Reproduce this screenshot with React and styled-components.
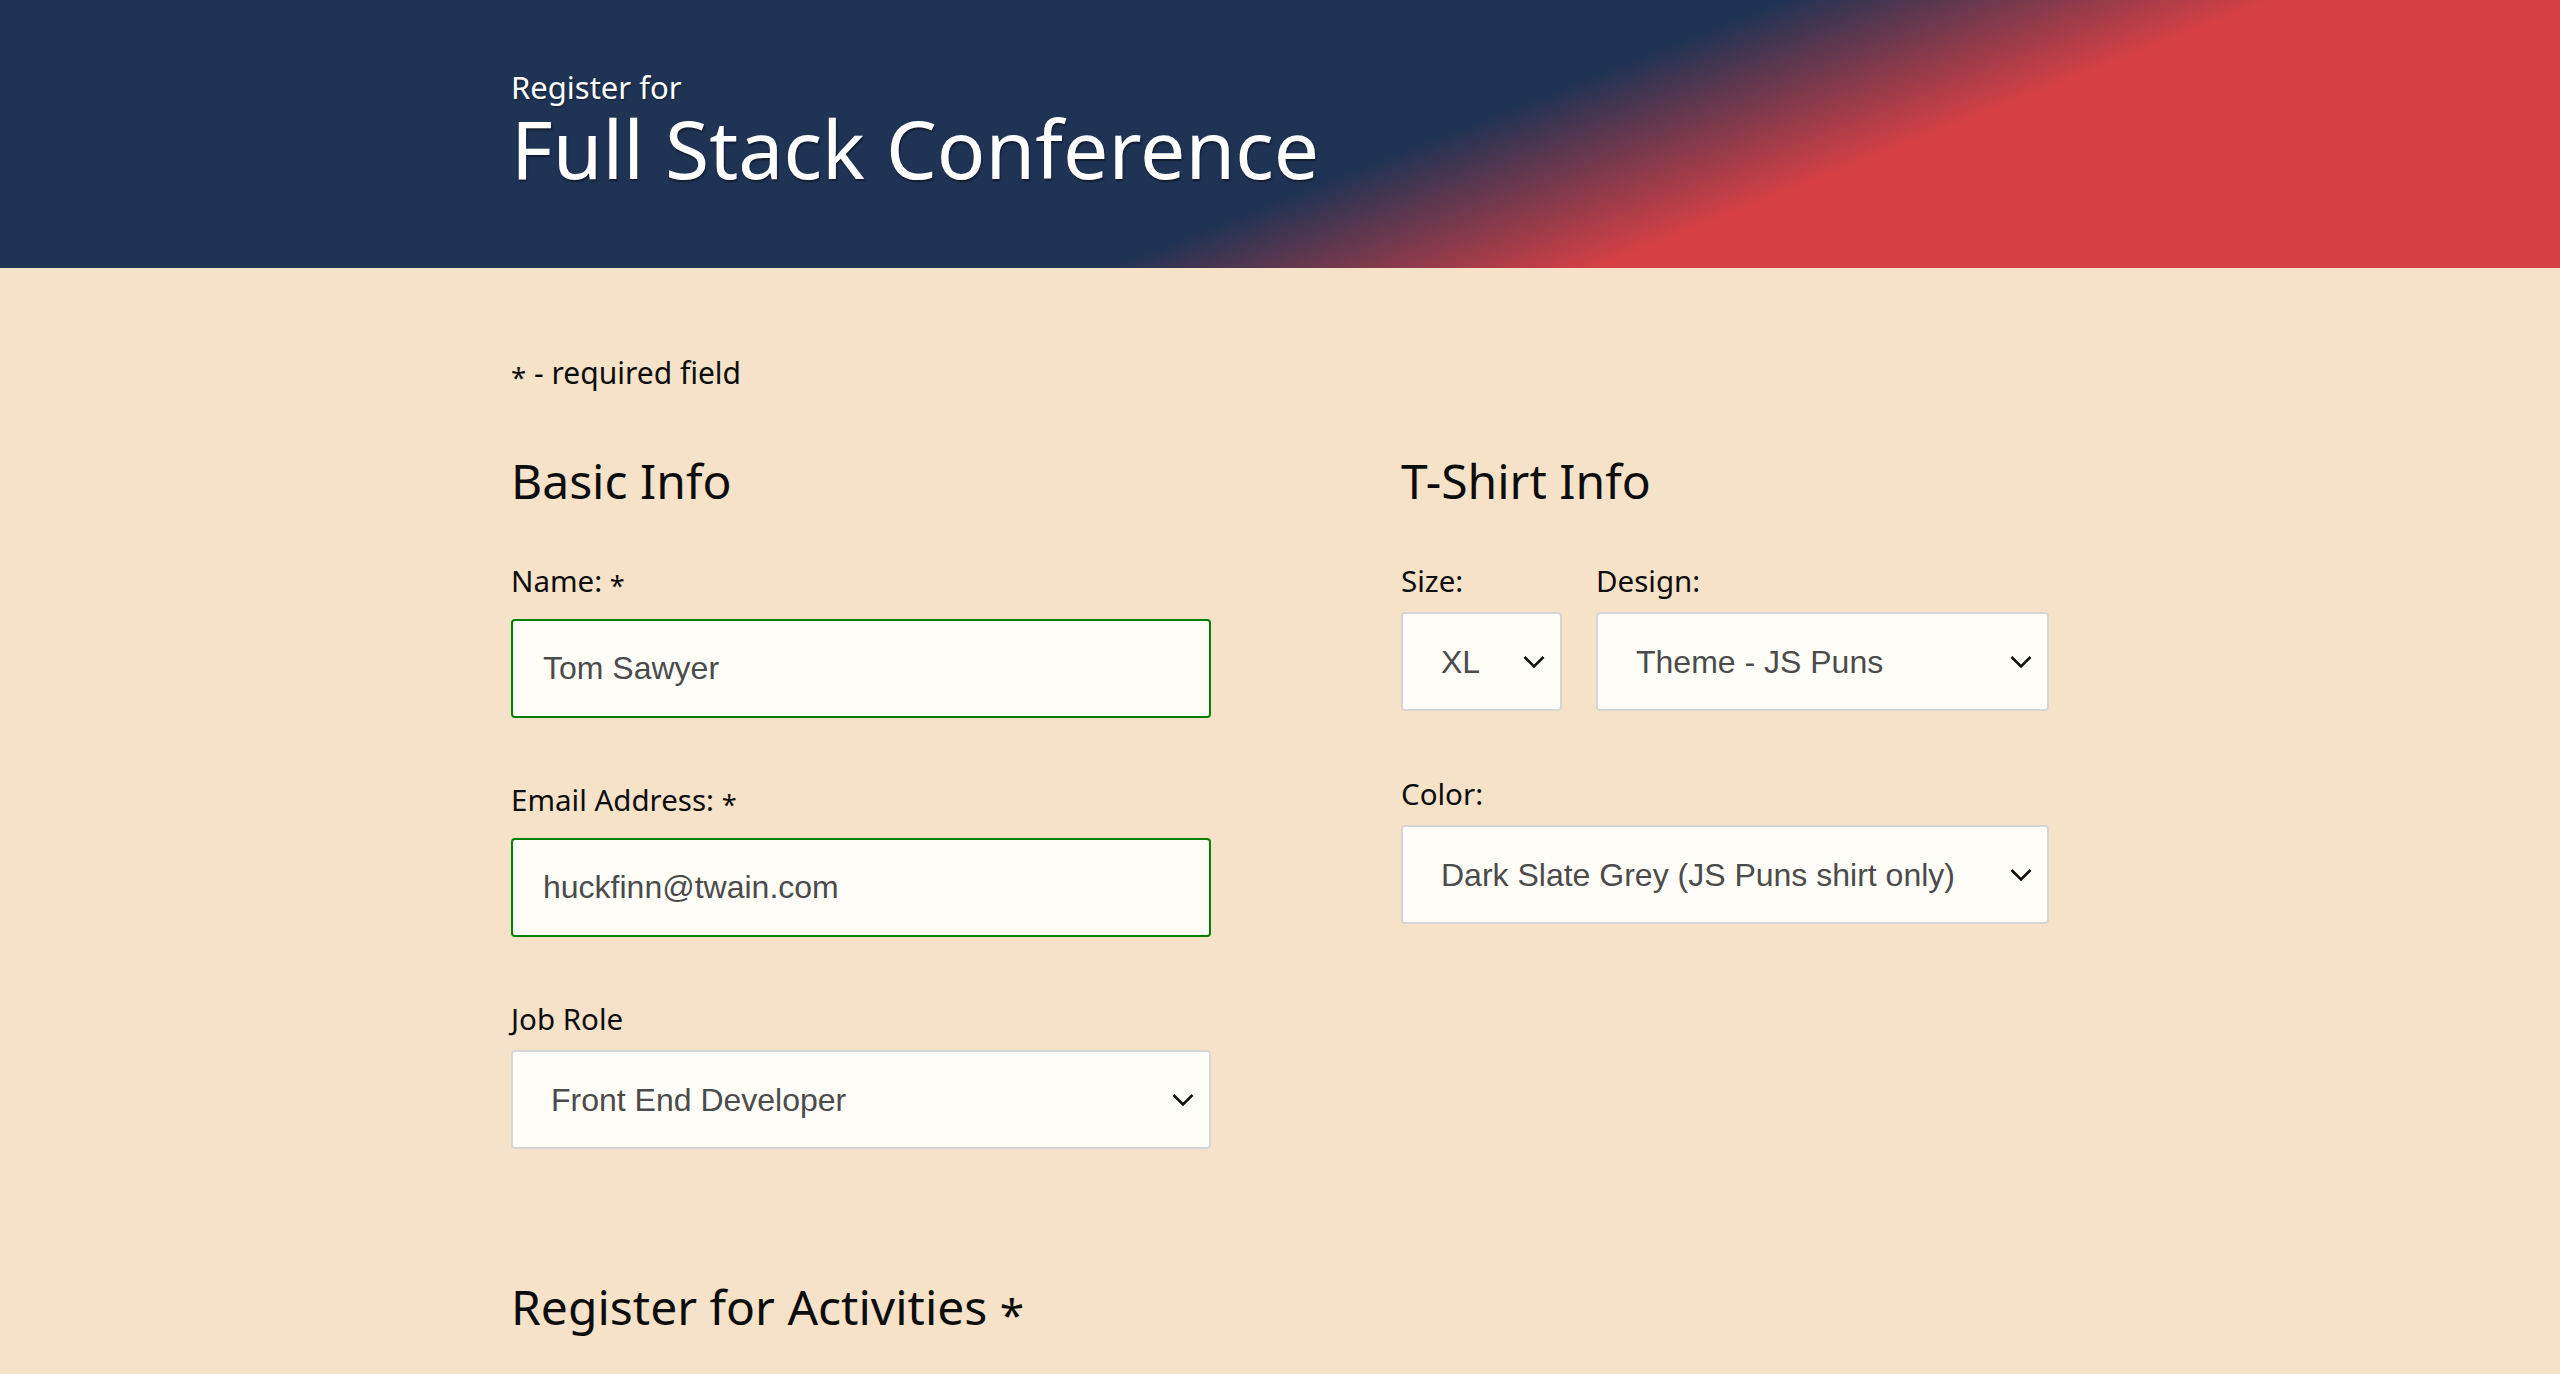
import React, { useState } from "react";
import styled, { createGlobalStyle } from "styled-components";

const GlobalStyle = createGlobalStyle`
  * {
    box-sizing: border-box;
  }
  body {
    margin: 0;
    background-color: #f6e2c8;
    font-family: "Noto Sans", "Open Sans", sans-serif;
    color: #0d0d0d;
  }
`;

const Header = styled.header`
  height: 268px;
  padding-top: 69px;
  background: linear-gradient(158.4deg, #1f3354 55%, #d64045 70.3%);
  color: white;
`;

const Wrap = styled.div`
  width: 1538px;
  margin: 0 auto;
`;

const Kicker = styled.p`
  margin: 0;
  font-size: 31px;
  line-height: 36px;
  text-shadow: 1px 1px 2px rgba(0, 0, 0, 0.35);
`;

const Title = styled.h1`
  margin: 1px 0 0;
  font-size: 80.5px;
  line-height: 84px;
  font-weight: 400;
  text-shadow: 1px 2px 2px rgba(0, 0, 0, 0.45);
`;

const Main = styled.main`
  padding-top: 85px;
  padding-bottom: 80px;
`;

const Note = styled.p`
  margin: 0;
  font-size: 30px;
  line-height: 40px;
`;

const Star = styled.span`
  position: relative;
  top: 0.14em;
  font-size: 0.92em;
`;

const Columns = styled.div`
  display: grid;
  grid-template-columns: 1fr 648px;
  margin-top: 60px;
`;

const Fieldset = styled.fieldset`
  border: 0;
  margin: 0;
  padding: 0;
  min-width: 0;
`;

const Legend = styled.h2`
  margin: ${(p) => p.$top || 0}px 0 52px;
  font-size: 48px;
  line-height: 56px;
  font-weight: 400;
`;

const Label = styled.label`
  display: block;
  margin-top: ${(p) => p.$top || 0}px;
  font-size: 29.5px;
  line-height: 40px;
`;

const Field = styled.div`
  width: ${(p) => p.$width}px;
`;

const TextInput = styled.input`
  display: block;
  width: 100%;
  height: 99px;
  margin-top: 17px;
  padding: 0 30px;
  border: 2px solid #008000;
  border-radius: 4px;
  background: #fffdf8;
  font-family: "Liberation Sans", Arial, Helvetica, sans-serif;
  font-size: 32px;
  color: #4b4b4b;
  outline: 0;
`;

const SelectBox = styled.div`
  position: relative;
  margin-top: 11px;

  svg {
    position: absolute;
    top: 50%;
    right: 17px;
    transform: translateY(-50%);
    pointer-events: none;
  }
`;

const Select = styled.select`
  display: block;
  width: 100%;
  height: 99px;
  padding: 0 48px 0 38px;
  border: 2px solid #d6d6d6;
  border-radius: 4px;
  background: #fffdf8;
  appearance: none;
  font-family: "Liberation Sans", Arial, Helvetica, sans-serif;
  font-size: 32px;
  color: #4b4b4b;
  outline: 0;
`;

const Row = styled.div`
  display: flex;
  gap: 34px;
`;

const Chevron = () => (
  <svg width="22" height="13" viewBox="0 0 22 13">
    <polyline
      points="1.5,1.5 11,11 20.5,1.5"
      fill="none"
      stroke="#111"
      strokeWidth="2.6"
    />
  </svg>
);

function Dropdown({ id, value, options, onChange }) {
  return (
    <SelectBox>
      <Select id={id} value={value} onChange={(e) => onChange(e.target.value)}>
        {options.map((o) => (
          <option key={o}>{o}</option>
        ))}
      </Select>
      <Chevron />
    </SelectBox>
  );
}

export default function App() {
  const [name, setName] = useState("Tom Sawyer");
  const [email, setEmail] = useState("huckfinn@twain.com");
  const [role, setRole] = useState("Front End Developer");
  const [size, setSize] = useState("XL");
  const [design, setDesign] = useState("Theme - JS Puns");
  const [color, setColor] = useState("Dark Slate Grey (JS Puns shirt only)");

  return (
    <>
      <GlobalStyle />
      <Header>
        <Wrap>
          <Kicker>Register for</Kicker>
          <Title>Full Stack Conference</Title>
        </Wrap>
      </Header>
      <Main>
        <Wrap>
          <Note>
            <Star>*</Star> - required field
          </Note>
          <Columns>
            <Fieldset>
              <Legend>Basic Info</Legend>
              <Field $width={700}>
                <Label htmlFor="name">
                  Name: <Star>*</Star>
                </Label>
                <TextInput
                  id="name"
                  value={name}
                  onChange={(e) => setName(e.target.value)}
                />
                <Label htmlFor="email" $top={62}>
                  Email Address: <Star>*</Star>
                </Label>
                <TextInput
                  id="email"
                  value={email}
                  onChange={(e) => setEmail(e.target.value)}
                />
                <Label htmlFor="title" $top={62}>
                  Job Role
                </Label>
                <Dropdown
                  id="title"
                  value={role}
                  onChange={setRole}
                  options={[
                    "Full Stack JavaScript Developer",
                    "Front End Developer",
                    "Back End Developer",
                    "Designer",
                    "Student",
                    "Other",
                  ]}
                />
              </Field>
            </Fieldset>
            <Fieldset>
              <Legend>T-Shirt Info</Legend>
              <Row>
                <Field $width={161}>
                  <Label htmlFor="size">Size:</Label>
                  <Dropdown
                    id="size"
                    value={size}
                    onChange={setSize}
                    options={["S", "M", "L", "XL"]}
                  />
                </Field>
                <Field $width={453}>
                  <Label htmlFor="design">Design:</Label>
                  <Dropdown
                    id="design"
                    value={design}
                    onChange={setDesign}
                    options={["Select Theme", "Theme - JS Puns", "Theme - I ♥ JS"]}
                  />
                </Field>
              </Row>
              <Label htmlFor="color" $top={63}>
                Color:
              </Label>
              <Dropdown
                id="color"
                value={color}
                onChange={setColor}
                options={[
                  "Cornflower Blue (JS Puns shirt only)",
                  "Dark Slate Grey (JS Puns shirt only)",
                  "Gold (JS Puns shirt only)",
                ]}
              />
            </Fieldset>
          </Columns>
          <Legend $top={130}>
            Register for Activities <Star>*</Star>
          </Legend>
        </Wrap>
      </Main>
    </>
  );
}
